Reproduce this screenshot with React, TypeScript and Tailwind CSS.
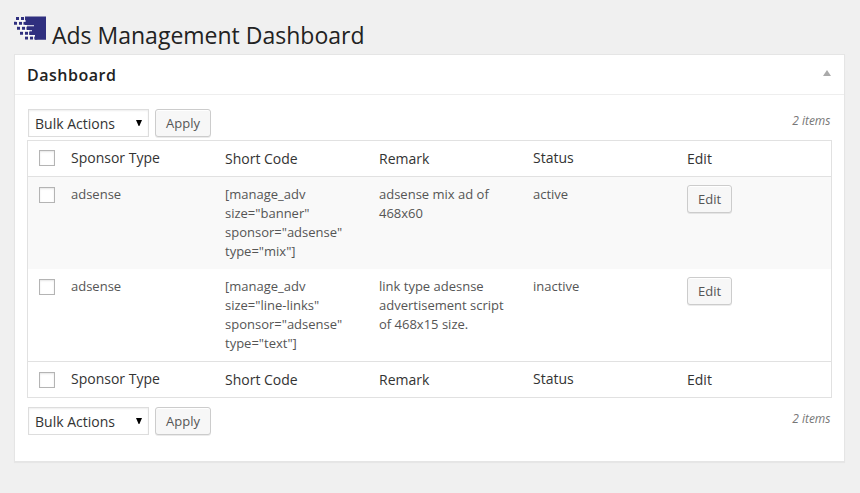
import React from "react";

const columns = ["Sponsor Type", "Short Code", "Remark", "Status", "Edit"];

const ads = [
  {
    type: "adsense",
    code: ["[manage_adv", 'size="banner"', 'sponsor="adsense"', 'type="mix"]'],
    remark: ["adsense mix ad of", "468x60"],
    status: "active",
  },
  {
    type: "adsense",
    code: ["[manage_adv", 'size="line-links"', 'sponsor="adsense"', 'type="text"]'],
    remark: ["link type adesnse", "advertisement script", "of 468x15 size."],
    status: "inactive",
  },
];

const grid = "grid grid-cols-[33px_154px_154px_154px_154px_1fr]";

function Logo() {
  return (
    <svg width="32" height="24" viewBox="0 0 32 24" className="mt-4 shrink-0">
      <path fill="#2f2f7f" d="M11 0.4H32V23.8H21V19H15.5V14H13V9H11Z" />
      <g fill="#2f2f7f">
        <path d="M2 1h3v3H2zM7 1h3v3H7zM0 5.8h3v3H0zM5 5.8h3v3H5zM9.5 5.8h3v3h-3zM3 10.8h3v3H3zM8 10.8h3v3H8zM12.5 10.8h3v3h-3zM6 15.8h3v3H6zM11 15.8h3v3h-3zM15.3 15.8h3v3h-3zM11 20.6h3v3h-3zM16 20.6h3v3h-3zM20.3 20.6h3v3h-3z" />
      </g>
      <g fill="#ffffff">
        <path d="M2 4.4h10v1H2zM4 9.3h16v1H4zM6 14.3h12v1H6zM9 19.2h12v1H9z" />
      </g>
    </svg>
  );
}

function Checkbox() {
  return (
    <input
      type="checkbox"
      className="block size-4 appearance-none border border-[#b4b4b4] bg-white shadow-[inset_0_1px_2px_rgba(0,0,0,0.1)]"
    />
  );
}

function Button({ children }: { children: React.ReactNode }) {
  return (
    <button className="block h-7 rounded-[3px] border border-[#ccc] bg-[#f7f7f7] px-2.5 text-[13px] leading-[26px] text-[#555] shadow-[inset_0_1px_0_#fff,0_1px_0_rgba(0,0,0,0.08)]">
      {children}
    </button>
  );
}

function HeadRow({ className, boxClassName }: { className: string; boxClassName: string }) {
  return (
    <div className={`${grid} text-[14px] leading-[19px] text-[#333] ${className}`}>
      <div className={`pl-[11px] ${boxClassName}`}>
        <Checkbox />
      </div>
      {columns.map((name) => (
        <div
          key={name}
          className={`pl-2.5 ${name === "Sponsor Type" || name === "Status" ? "pt-[7px]" : "pt-2"}`}
        >
          {name}
        </div>
      ))}
    </div>
  );
}

function Toolbar() {
  return (
    <div className="flex h-7 pr-[1.5px] pl-[1px]">
      <button className="flex h-7 w-[121px] items-center justify-between border border-[#ddd] bg-white pr-[6px] pl-1.5 text-[14px] text-[#333] shadow-[inset_0_1px_2px_rgba(0,0,0,0.07)]">
        <span className="pt-[1px] leading-[19px]">Bulk Actions</span>
        <svg width="6" height="6" viewBox="0 0 6 6" className="mb-px">
          <path d="M0 0h6L3.4 6h-.8z" fill="#000" />
        </svg>
      </button>
      <div className="ml-1.5">
        <Button>Apply</Button>
      </div>
      <span className="ml-auto pt-[3px] text-[12px] leading-[18px] text-[#777] italic">2 items</span>
    </div>
  );
}

export default function App() {
  return (
    <div className="h-[493px] w-[860px] overflow-hidden bg-[#f0f0f0] px-3.5 font-['Open_Sans',sans-serif]">
      <header className="flex h-[54px]">
        <Logo />
        <h1 className="ml-1.5 pt-5 text-[23px] leading-[30px] text-[#222]">Ads Management Dashboard</h1>
      </header>
      <section className="h-[408px] w-[831px] border border-[#e5e5e5] bg-white shadow-[0_1px_1px_rgba(0,0,0,0.04)]">
        <div className="flex h-10 items-start justify-between border-b border-[#eee] pr-[13px] pl-3">
          <h2 className="pt-[9px] text-[16px] leading-[22px] font-semibold tracking-[0.5px] text-[#222]">Dashboard</h2>
          <svg width="8" height="6" viewBox="0 0 8 6" className="mt-[15px]">
            <path d="M0 6L4 0L8 6z" fill="#aaa" />
          </svg>
        </div>
        <div className="px-3 pt-3.5">
          <Toolbar />
          <div className="mt-[3px] h-[258px] border border-[#e1e1e1] text-[13px] leading-[19px] text-[#555]">
            <HeadRow className="h-9 border-b border-[#e1e1e1]" boxClassName="pt-[9px]" />
            {ads.map((ad, i) => (
              <div key={ad.status} className={`${grid} h-[92px] ${i === 0 ? "bg-[#f9f9f9]" : "bg-white"}`}>
                <div className="pt-2.5 pl-[11px]">
                  <Checkbox />
                </div>
                <div className="pt-2 pl-2.5">{ad.type}</div>
                <div className="pt-2 pl-2.5">
                  {ad.code.map((line) => (
                    <div key={line}>{line}</div>
                  ))}
                </div>
                <div className="pt-2 pl-2.5">
                  {ad.remark.map((line) => (
                    <div key={line}>{line}</div>
                  ))}
                </div>
                <div className="pt-2 pl-2.5">{ad.status}</div>
                <div className="pt-2 pl-2.5">
                  <Button>Edit</Button>
                </div>
              </div>
            ))}
            <HeadRow className="h-9 border-t border-[#e1e1e1]" boxClassName="pt-2.5" />
          </div>
          <div className="pt-[9px]">
            <Toolbar />
          </div>
        </div>
      </section>
    </div>
  );
}
